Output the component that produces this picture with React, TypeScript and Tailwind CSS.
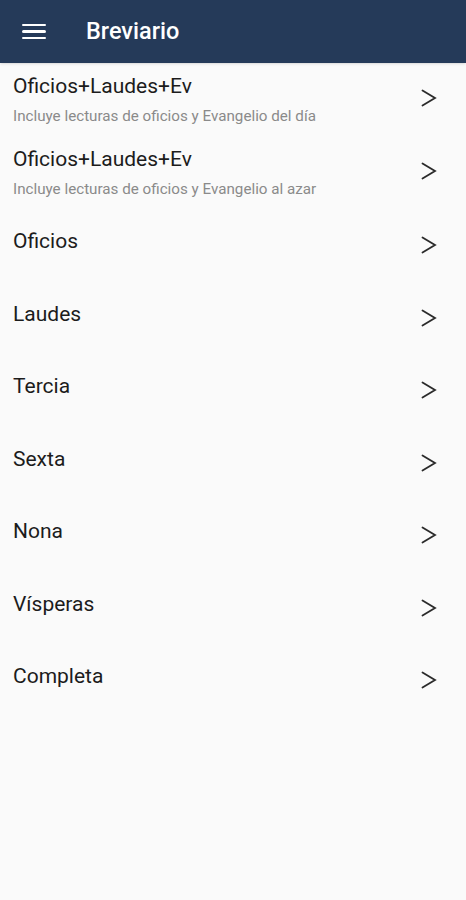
import React from 'react';

interface Item {
  title: string;
  subtitle?: string;
}

const items: Item[] = [
  { title: 'Oficios+Laudes+Ev', subtitle: 'Incluye lecturas de oficios y Evangelio del día' },
  { title: 'Oficios+Laudes+Ev', subtitle: 'Incluye lecturas de oficios y Evangelio al azar' },
  { title: 'Oficios' },
  { title: 'Laudes' },
  { title: 'Tercia' },
  { title: 'Sexta' },
  { title: 'Nona' },
  { title: 'Vísperas' },
  { title: 'Completa' },
];

const Chevron = () => (
  <svg width="16" height="18" viewBox="0 0 16 18" fill="none" className="text-[#2a2a2a]">
    <polyline points="1.5,1.5 14,9 1.5,16.5" stroke="currentColor" strokeWidth="1.8" strokeLinecap="round" strokeLinejoin="miter" />
  </svg>
);

const App: React.FC = () => {
  return (
    <div className="min-h-[900px] bg-[#fafafa] font-['Roboto',sans-serif]">
      <header className="h-[63px] bg-[#253a59] flex items-center shadow-sm">
        <button className="ml-[22px] w-[24px] flex flex-col gap-[4px]" aria-label="Menú">
          <span className="block h-[2.5px] bg-white rounded-sm" />
          <span className="block h-[2.5px] bg-white rounded-sm" />
          <span className="block h-[2.5px] bg-white rounded-sm" />
        </button>
        <h1 className="ml-[40px] text-white text-[23.5px] font-medium">Breviario</h1>
      </header>

      <main>
        {items.map((item, i) => (
          <div key={i} className="h-[72.5px] flex items-start pl-[13px] pr-[29px]">
            <div className={`flex-1 ${item.subtitle ? 'pt-[9px]' : 'pt-[19px]'}`}>
              <p className="text-[21px] leading-[28px] text-[#1c1c1c]">{item.subtitle ? item.title : item.title}</p>
              {item.subtitle && (
                <p className="text-[15.2px] leading-[20px] mt-[6px] text-[#8a8a8a]">{item.subtitle}</p>
              )}
            </div>
            <div className={item.subtitle ? 'pt-[26px]' : 'pt-[28px]'}>
              <Chevron />
            </div>
          </div>
        ))}
      </main>
    </div>
  );
};

export default App;
